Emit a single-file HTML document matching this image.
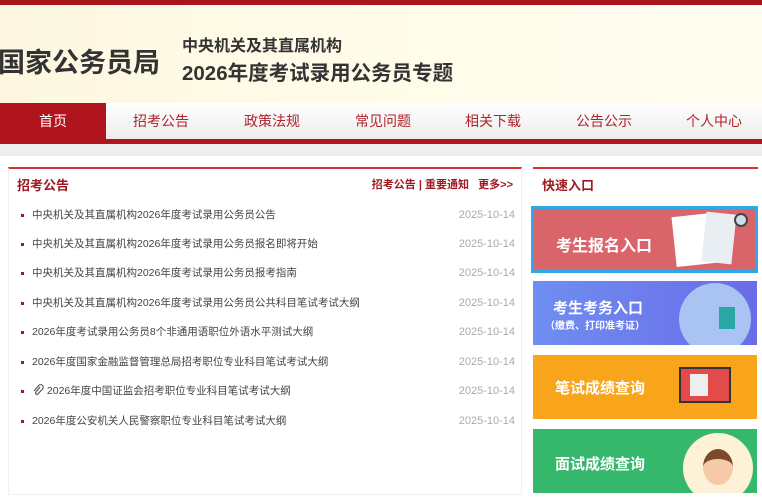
<!DOCTYPE html>
<html><head><meta charset="utf-8"><style>
*{margin:0;padding:0;box-sizing:border-box}
body{width:762px;height:500px;overflow:hidden;background:#fff;font-family:"Liberation Sans","Noto Sans CJK SC",sans-serif;position:relative}
.top{position:absolute;left:0;top:0;width:762px;height:5px;background:#a8151c}
.hdr{position:absolute;left:0;top:5px;width:762px;height:98px;background:linear-gradient(90deg,#fdf7e1,#fffbe8 40%,#fffdf0)}
.t1{position:absolute;left:-2px;top:36px;font-size:27px;font-weight:bold;color:#333;letter-spacing:0}
.t2{position:absolute;left:182px;top:27px;font-size:16px;font-weight:bold;color:#333}
.t3{position:absolute;left:182px;top:51px;font-size:20.5px;font-weight:bold;color:#333}
.nav{position:absolute;left:0;top:103px;width:762px;height:36px;background:linear-gradient(#fff,#ececec)}
.nav div{position:absolute;top:0;height:36px;line-height:36px;font-size:14px;color:#b0232a;text-align:center;width:106px}
.nav .on{background:#b0141c;color:#fff;height:37px}
.rl{position:absolute;left:0;top:139px;width:762px;height:5px;background:#b0141c}
.gs{position:absolute;left:0;top:144px;width:762px;height:12px;background:#eeeeee}
.lp{position:absolute;left:8px;top:167px;width:514px;height:328px;border-top:2px solid #d2303a;border-left:1px solid #f0f0f0;border-right:1px solid #f0f0f0;border-bottom:1px solid #eee}
.lp h3{position:absolute;left:8px;top:6px;font-size:13px;color:#9e1a20}
.lp .mr{position:absolute;right:8px;top:7px;font-size:11px;font-weight:bold;color:#9e1a20}
.row{position:absolute;left:12px;width:494px;font-size:10.5px;color:#444;height:16px;line-height:16px}
.row:before{content:"";position:absolute;left:0;top:7px;width:3px;height:3px;background:#9e1a20}
.row span{position:absolute;left:11px}
.row i{position:absolute;right:0;font-style:normal;color:#aaa;font-size:11px}
.rp{position:absolute;left:533px;top:167px;width:225px;height:36px;border-top:2px solid #d2303a}
.rp h3{position:absolute;left:9px;top:6px;font-size:13px;color:#9e1a20}
.card{position:absolute;left:533px;width:224px;height:64px;overflow:hidden}
.card b{position:absolute;color:#fff;font-size:15px;left:22px}
</style></head><body>
<div class="top"></div>
<div class="hdr">
<div class="t1">国家公务员局</div>
<div class="t2">中央机关及其直属机构</div>
<div class="t3">2026年度考试录用公务员专题</div>
</div>
<div class="nav">
<div class="on" style="left:0">首页</div>
<div style="left:108px">招考公告</div>
<div style="left:219px">政策法规</div>
<div style="left:330px">常见问题</div>
<div style="left:440px">相关下载</div>
<div style="left:551px">公告公示</div>
<div style="left:661px">个人中心</div>
</div>
<div class="rl"></div><div class="gs"></div>
<div class="lp">
<h3>招考公告</h3>
<div class="mr">招考公告 | 重要通知 &nbsp; 更多&gt;&gt;</div>
<div class="row" style="top:38px"><span>中央机关及其直属机构2026年度考试录用公务员公告</span><i>2025-10-14</i></div>
<div class="row" style="top:67px"><span>中央机关及其直属机构2026年度考试录用公务员报名即将开始</span><i>2025-10-14</i></div>
<div class="row" style="top:96px"><span>中央机关及其直属机构2026年度考试录用公务员报考指南</span><i>2025-10-14</i></div>
<div class="row" style="top:126px"><span>中央机关及其直属机构2026年度考试录用公务员公共科目笔试考试大纲</span><i>2025-10-14</i></div>
<div class="row" style="top:155px"><span>2026年度考试录用公务员8个非通用语职位外语水平测试大纲</span><i>2025-10-14</i></div>
<div class="row" style="top:185px"><span>2026年度国家金融监督管理总局招考职位专业科目笔试考试大纲</span><i>2025-10-14</i></div>
<div class="row" style="top:214px"><span><svg width="12" height="12" viewBox="0 0 12 12" style="vertical-align:-2px"><path d="M8 3L4 8a1.3 1.3 0 0 0 2 2l4.5-5a2.5 2.5 0 0 0-3.8-3.5L2 7" fill="none" stroke="#555" stroke-width="1.2"/></svg> 2026年度中国证监会招考职位专业科目笔试考试大纲</span><i>2025-10-14</i></div>
<div class="row" style="top:244px"><span>2026年度公安机关人民警察职位专业科目笔试考试大纲</span><i>2025-10-14</i></div>
</div>
<div class="rp"><h3>快速入口</h3></div>
<div class="card" style="top:206px;left:531px;width:227px;height:67px;background:#d9656b;border:3px solid #2fa8e6">
<b style="top:23px;font-size:16px">考生报名入口</b>
<div style="position:absolute;left:140px;top:6px;width:40px;height:50px;background:#fff;transform:rotate(-6deg)"></div>
<div style="position:absolute;left:170px;top:4px;width:30px;height:50px;background:#e9eef3;transform:rotate(6deg)"></div>
<div style="position:absolute;left:200px;top:4px;width:14px;height:14px;border-radius:50%;border:2px solid #444;background:#cde"></div>
</div>
<div class="card" style="top:281px;background:linear-gradient(90deg,#6f8ef0,#6a6ce8)">
<b style="top:16px;left:20px">考生考务入口</b>
<b style="top:36px;font-size:10px;left:12px">（缴费、打印准考证）</b>
<div style="position:absolute;left:146px;top:2px;width:72px;height:72px;border-radius:50%;background:#a9c3f2"></div>
<div style="position:absolute;left:186px;top:26px;width:16px;height:22px;background:#2aa7a5"></div>
</div>
<div class="card" style="top:355px;background:#f9a51c">
<b style="top:22px">笔试成绩查询</b>
<div style="position:absolute;left:146px;top:12px;width:52px;height:36px;background:#e34b4b;border:2px solid #333"></div>
<div style="position:absolute;left:157px;top:19px;width:18px;height:22px;background:#eee"></div>
</div>
<div class="card" style="top:429px;background:#36b86c">
<b style="top:24px">面试成绩查询</b>
<div style="position:absolute;left:150px;top:4px;width:70px;height:70px;border-radius:50%;background:#fdf2d8"></div>
<div style="position:absolute;left:170px;top:20px;width:30px;height:36px;border-radius:50%;background:#f6c9a8;border-top:10px solid #7b4a2a"></div>
</div>
</body></html>
